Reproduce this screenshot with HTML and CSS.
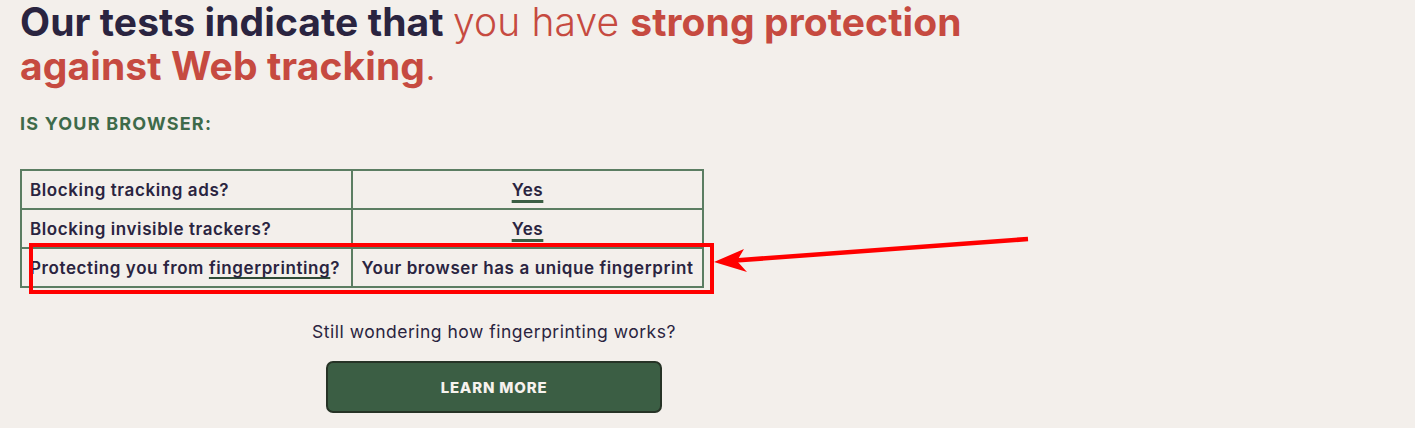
FILE: index.html
```html
<!DOCTYPE html>
<html lang="en">
<head>
<meta charset="utf-8">
<title>Cover Your Tracks</title>
<link rel="stylesheet" href="styles.css">
</head>
<body>
<main class="page">
  <h1 class="result">Our tests indicate that <span class="soft">you have </span><strong class="hot">strong protection against Web tracking</strong><span class="soft">.</span></h1>
  <h2 class="subhead">IS YOUR BROWSER:</h2>
  <table class="results">
    <tr>
      <td class="q">Blocking tracking ads?</td>
      <td class="a"><a class="yes" href="#">Yes</a></td>
    </tr>
    <tr>
      <td class="q">Blocking invisible trackers?</td>
      <td class="a"><a class="yes" href="#">Yes</a></td>
    </tr>
    <tr>
      <td class="q">Protecting you from <a class="link" href="#">fingerprinting</a>?</td>
      <td class="a">Your browser has a unique fingerprint</td>
    </tr>
  </table>
  <div class="more">
    <p class="wonder">Still wondering how fingerprinting works?</p>
    <a class="btn" href="#">LEARN MORE</a>
  </div>
</main>
<svg class="annot" width="1415" height="428" viewBox="0 0 1415 428" aria-hidden="true">
  <rect x="31" y="245" width="681" height="47" fill="none" stroke="#ff0000" stroke-width="4"/>
  <line x1="1028" y1="239" x2="735" y2="260.5" stroke="#ff0000" stroke-width="4.5"/>
  <path d="M714 262 L744 249 L737 261 L747 272 Z" fill="#ff0000"/>
</svg>
</body>
</html>
```

FILE: styles.css
```css
html, body {
  margin: 0;
  padding: 0;
  background: #f3efeb;
}
body {
  font-family: Inter, "Noto Sans", sans-serif;
  color: #2a2440;
  position: relative;
  width: 1415px;
  height: 428px;
  overflow: hidden;
}
.page {
  width: 948px;
  padding-left: 20px;
}
.result {
  margin: 0;
  font-size: 39px;
  line-height: 44px;
  font-weight: 700;
  letter-spacing: 0.1px;
  color: #2a2440;
}
.soft {
  font-weight: 300;
  color: #c64a40;
}
.hot {
  font-weight: 700;
  color: #c64a40;
}
.subhead {
  margin: 26px 0 0;
  font-size: 18px;
  line-height: 20px;
  font-weight: 700;
  letter-spacing: 1.2px;
  color: #3e6a4a;
}
.results {
  margin-top: 35px;
  border-collapse: collapse;
  table-layout: fixed;
  width: 684px;
  border: 2px solid #5b7d62;
}
.results td {
  border: 2px solid #5b7d62;
  height: 37px;
  padding: 0 8px;
  font-size: 17px;
  font-weight: 600;
  letter-spacing: 0.6px;
  color: #2a2440;
  white-space: nowrap;
}
.results td.q {
  width: 313px;
  padding-left: 8px;
}
.results td.a {
  text-align: center;
}
.yes {
  color: #2a2440;
  text-decoration: underline;
  text-decoration-color: #3b5e44;
  text-decoration-thickness: 3px;
  text-underline-offset: 4px;
  text-decoration-skip-ink: none;
}
.link {
  color: #2a2440;
  text-decoration: underline;
  text-decoration-color: #2f4a36;
  text-decoration-thickness: 1.5px;
  text-underline-offset: 3px;
  text-decoration-skip-ink: none;
}
.more {
  display: flex;
  flex-direction: column;
  align-items: center;
}
.wonder {
  margin: 33px 0 0;
  font-size: 17.5px;
  line-height: 22px;
  letter-spacing: 0.5px;
  color: #2a2440;
}
.btn {
  margin-top: 18px;
  box-sizing: border-box;
  width: 336px;
  height: 52px;
  display: flex;
  align-items: center;
  justify-content: center;
  background: #3b5e44;
  border: 2px solid #263326;
  border-radius: 7px;
  color: #f6f2ee;
  font-size: 15px;
  font-weight: 800;
  letter-spacing: 0.8px;
  text-decoration: none;
}
.annot {
  position: absolute;
  left: 0;
  top: 0;
  pointer-events: none;
}
```
